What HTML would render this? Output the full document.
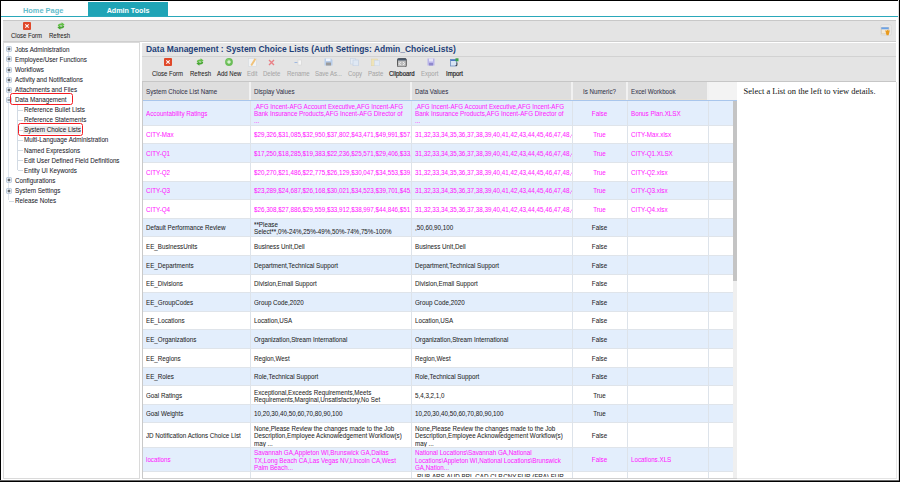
<!DOCTYPE html>
<html><head><meta charset="utf-8"><style>
html,body{margin:0;padding:0;width:900px;height:482px;overflow:hidden;background:#fff;}
body>div,body>svg{position:absolute;}
body>div{white-space:nowrap;}
</style></head><body>
<div style="left:23px;top:6.54px;font:bold 7.400px/7.400px 'Liberation Sans', sans-serif;color:#63bdcc;letter-spacing:0.000px;">Home Page</div>
<div style="left:88px;top:2px;width:80px;height:14px;background:#1fa4b6;"></div>
<div style="left:88px;top:7.85px;width:80px;height:9.15px;overflow:hidden;"><div style="position:absolute;left:0;top:0;width:80.00px;text-align:center;font:bold 7.150px/7.150px 'Liberation Sans', sans-serif;color:#fff;letter-spacing:0.000px;">Admin Tools</div></div>
<div style="left:1px;top:16px;width:898px;height:1px;background:#2aa8ba;"></div>
<div style="left:3px;top:20px;width:893px;height:22px;background:#e4e4e4;border-top:1px solid #c8c8c8;border-bottom:1px solid #cfcfcf;box-sizing:border-box;"></div>
<svg style="left:23px;top:21.5px" width="8" height="8" viewBox="0 0 8 8"><rect x="0" y="0" width="8" height="8" rx="1" fill="#e0482a"/><path d="M2.3 2.3 L5.7 5.7 M5.7 2.3 L2.3 5.7" stroke="#fff" stroke-width="1.05"/></svg>
<div style="left:11px;top:33.07px;font:normal 6.772px/6.772px 'Liberation Sans', sans-serif;color:#222;letter-spacing:0.000px;-webkit-text-stroke:0.05px #222;transform:scale(0.8860,1.0000);transform-origin:0 0;">Close Form</div>
<svg style="left:56.5px;top:21.6px" width="8" height="8" viewBox="0 0 8 8"><path d="M0.8 4.2 Q0.8 1.6 3.8 1.6 L4.6 1.6 L4.6 0.2 L7.6 2.4 L4.6 4.6 L4.6 3.2 L3.9 3.2 Q2.4 3.2 2.4 4.2 Z" fill="#63bf47"/><path d="M7.2 3.8 Q7.2 6.4 4.2 6.4 L3.4 6.4 L3.4 7.8 L0.4 5.6 L3.4 3.4 L3.4 4.8 L4.1 4.8 Q5.6 4.8 5.6 3.8 Z" fill="#47a632"/></svg>
<div style="left:49px;top:33.07px;font:normal 6.772px/6.772px 'Liberation Sans', sans-serif;color:#222;letter-spacing:0.000px;-webkit-text-stroke:0.05px #222;transform:scale(0.8860,1.0000);transform-origin:0 0;">Refresh</div>
<div style="left:879.5px;top:24.2px;width:12.5px;height:11.8px;border:1px solid #dcdcdc;border-radius:2.5px;box-sizing:border-box;background:#e8e8e8;"></div>
<svg style="left:881px;top:26.8px" width="9" height="9" viewBox="0 0 9 9"><rect x="0.3" y="0.3" width="7.4" height="6.6" rx="0.6" fill="#f3eadb" stroke="#c8b89a" stroke-width="0.6"/><rect x="0.3" y="0.3" width="7.4" height="2" fill="#6aa2e8"/><path d="M4.2 3.2 L5.6 3.8 L6.6 2.8 L7.6 3.8 L8.8 3.3 L7.6 8.2 L5.6 8.2 Z" fill="#e99a1c"/></svg>
<div style="left:3px;top:42px;width:137px;height:437px;background:#fff;border:1px solid #dadada;box-sizing:border-box;"></div>
<div style="left:8px;top:50px;width:1px;height:150px;background:#dfe5ec;"></div>
<div style="left:17px;top:104px;width:1px;height:66px;background:#d3dbe4;"></div>
<svg style="left:5.5px;top:46.40px" width="6" height="6" viewBox="0 0 6 6"><rect x="0.4" y="0.4" width="5.2" height="5.2" rx="1.3" fill="#e9eff6" stroke="#a9bcd2" stroke-width="0.8"/><path d="M1.6 3 H4.4 M3 1.6 V4.4" stroke="#1a1a1a" stroke-width="0.8"/></svg>
<div style="left:15.2px;top:46.70px;font:normal 7.088px/7.088px 'Liberation Sans', sans-serif;color:#1a1a2a;letter-spacing:0.000px;-webkit-text-stroke:0.05px #1a1a2a;transform:scale(0.8860,1.0000);transform-origin:0 0;">Jobs Administration</div>
<svg style="left:5.5px;top:56.48px" width="6" height="6" viewBox="0 0 6 6"><rect x="0.4" y="0.4" width="5.2" height="5.2" rx="1.3" fill="#e9eff6" stroke="#a9bcd2" stroke-width="0.8"/><path d="M1.6 3 H4.4 M3 1.6 V4.4" stroke="#1a1a1a" stroke-width="0.8"/></svg>
<div style="left:15.2px;top:56.78px;font:normal 7.088px/7.088px 'Liberation Sans', sans-serif;color:#1a1a2a;letter-spacing:0.000px;-webkit-text-stroke:0.05px #1a1a2a;transform:scale(0.8860,1.0000);transform-origin:0 0;">Employee/User Functions</div>
<svg style="left:5.5px;top:66.56px" width="6" height="6" viewBox="0 0 6 6"><rect x="0.4" y="0.4" width="5.2" height="5.2" rx="1.3" fill="#e9eff6" stroke="#a9bcd2" stroke-width="0.8"/><path d="M1.6 3 H4.4 M3 1.6 V4.4" stroke="#1a1a1a" stroke-width="0.8"/></svg>
<div style="left:15.2px;top:66.86px;font:normal 7.088px/7.088px 'Liberation Sans', sans-serif;color:#1a1a2a;letter-spacing:0.000px;-webkit-text-stroke:0.05px #1a1a2a;transform:scale(0.8860,1.0000);transform-origin:0 0;">Workflows</div>
<svg style="left:5.5px;top:76.64px" width="6" height="6" viewBox="0 0 6 6"><rect x="0.4" y="0.4" width="5.2" height="5.2" rx="1.3" fill="#e9eff6" stroke="#a9bcd2" stroke-width="0.8"/><path d="M1.6 3 H4.4 M3 1.6 V4.4" stroke="#1a1a1a" stroke-width="0.8"/></svg>
<div style="left:15.2px;top:76.94px;font:normal 7.088px/7.088px 'Liberation Sans', sans-serif;color:#1a1a2a;letter-spacing:0.000px;-webkit-text-stroke:0.05px #1a1a2a;transform:scale(0.8860,1.0000);transform-origin:0 0;">Activity and Notifications</div>
<svg style="left:5.5px;top:86.72px" width="6" height="6" viewBox="0 0 6 6"><rect x="0.4" y="0.4" width="5.2" height="5.2" rx="1.3" fill="#e9eff6" stroke="#a9bcd2" stroke-width="0.8"/><path d="M1.6 3 H4.4 M3 1.6 V4.4" stroke="#1a1a1a" stroke-width="0.8"/></svg>
<div style="left:15.2px;top:87.02px;font:normal 7.088px/7.088px 'Liberation Sans', sans-serif;color:#1a1a2a;letter-spacing:0.000px;-webkit-text-stroke:0.05px #1a1a2a;transform:scale(0.8860,1.0000);transform-origin:0 0;">Attachments and Files</div>
<svg style="left:5.5px;top:96.80px" width="6" height="6" viewBox="0 0 6 6"><rect x="0.4" y="0.4" width="5.2" height="5.2" rx="1.3" fill="#e9eff6" stroke="#a9bcd2" stroke-width="0.8"/><path d="M1.6 3 H4.4" stroke="#1a1a1a" stroke-width="0.8"/></svg>
<div style="left:15.2px;top:97.10px;font:normal 7.088px/7.088px 'Liberation Sans', sans-serif;color:#1a1a2a;letter-spacing:0.000px;-webkit-text-stroke:0.05px #1a1a2a;transform:scale(0.8860,1.0000);transform-origin:0 0;">Data Management</div>
<div style="left:18px;top:110px;width:5px;height:1px;background:#d3dbe4;"></div>
<div style="left:24.4px;top:107.18px;font:normal 7.088px/7.088px 'Liberation Sans', sans-serif;color:#1a1a2a;letter-spacing:0.000px;-webkit-text-stroke:0.05px #1a1a2a;transform:scale(0.8860,1.0000);transform-origin:0 0;">Reference Bullet Lists</div>
<div style="left:18px;top:120px;width:5px;height:1px;background:#d3dbe4;"></div>
<div style="left:24.4px;top:117.26px;font:normal 7.088px/7.088px 'Liberation Sans', sans-serif;color:#1a1a2a;letter-spacing:0.000px;-webkit-text-stroke:0.05px #1a1a2a;transform:scale(0.8860,1.0000);transform-origin:0 0;">Reference Statements</div>
<div style="left:18px;top:130px;width:5px;height:1px;background:#d3dbe4;"></div>
<div style="left:22.5px;top:126.13999999999999px;width:58px;height:7.8px;background:#ececec;"></div>
<div style="left:24.4px;top:127.34px;font:normal 7.088px/7.088px 'Liberation Sans', sans-serif;color:#1a1a2a;letter-spacing:0.000px;-webkit-text-stroke:0.05px #1a1a2a;transform:scale(0.8860,1.0000);transform-origin:0 0;">System Choice Lists</div>
<div style="left:18px;top:140px;width:5px;height:1px;background:#d3dbe4;"></div>
<div style="left:24.4px;top:137.42px;font:normal 7.088px/7.088px 'Liberation Sans', sans-serif;color:#1a1a2a;letter-spacing:0.000px;-webkit-text-stroke:0.05px #1a1a2a;transform:scale(0.8860,1.0000);transform-origin:0 0;">Multi-Language Administration</div>
<div style="left:18px;top:150px;width:5px;height:1px;background:#d3dbe4;"></div>
<div style="left:24.4px;top:147.50px;font:normal 7.088px/7.088px 'Liberation Sans', sans-serif;color:#1a1a2a;letter-spacing:0.000px;-webkit-text-stroke:0.05px #1a1a2a;transform:scale(0.8860,1.0000);transform-origin:0 0;">Named Expressions</div>
<div style="left:18px;top:160px;width:5px;height:1px;background:#d3dbe4;"></div>
<div style="left:24.4px;top:157.58px;font:normal 7.088px/7.088px 'Liberation Sans', sans-serif;color:#1a1a2a;letter-spacing:0.000px;-webkit-text-stroke:0.05px #1a1a2a;transform:scale(0.8860,1.0000);transform-origin:0 0;">Edit User Defined Field Definitions</div>
<div style="left:18px;top:170px;width:5px;height:1px;background:#d3dbe4;"></div>
<div style="left:24.4px;top:167.66px;font:normal 7.088px/7.088px 'Liberation Sans', sans-serif;color:#1a1a2a;letter-spacing:0.000px;-webkit-text-stroke:0.05px #1a1a2a;transform:scale(0.8860,1.0000);transform-origin:0 0;">Entity UI Keywords</div>
<svg style="left:5.5px;top:177.44px" width="6" height="6" viewBox="0 0 6 6"><rect x="0.4" y="0.4" width="5.2" height="5.2" rx="1.3" fill="#e9eff6" stroke="#a9bcd2" stroke-width="0.8"/><path d="M1.6 3 H4.4 M3 1.6 V4.4" stroke="#1a1a1a" stroke-width="0.8"/></svg>
<div style="left:15.2px;top:177.74px;font:normal 7.088px/7.088px 'Liberation Sans', sans-serif;color:#1a1a2a;letter-spacing:0.000px;-webkit-text-stroke:0.05px #1a1a2a;transform:scale(0.8860,1.0000);transform-origin:0 0;">Configurations</div>
<svg style="left:5.5px;top:187.52px" width="6" height="6" viewBox="0 0 6 6"><rect x="0.4" y="0.4" width="5.2" height="5.2" rx="1.3" fill="#e9eff6" stroke="#a9bcd2" stroke-width="0.8"/><path d="M1.6 3 H4.4 M3 1.6 V4.4" stroke="#1a1a1a" stroke-width="0.8"/></svg>
<div style="left:15.2px;top:187.82px;font:normal 7.088px/7.088px 'Liberation Sans', sans-serif;color:#1a1a2a;letter-spacing:0.000px;-webkit-text-stroke:0.05px #1a1a2a;transform:scale(0.8860,1.0000);transform-origin:0 0;">System Settings</div>
<div style="left:9px;top:201px;width:5px;height:1px;background:#d3dbe4;"></div>
<div style="left:15.2px;top:197.90px;font:normal 7.088px/7.088px 'Liberation Sans', sans-serif;color:#1a1a2a;letter-spacing:0.000px;-webkit-text-stroke:0.05px #1a1a2a;transform:scale(0.8860,1.0000);transform-origin:0 0;">Release Notes</div>
<div style="left:10.4px;top:92.8px;width:62.6px;height:11.9px;border:1.4px solid #f41c22;border-radius:2.5px;box-sizing:border-box;"></div>
<div style="left:18px;top:123.3px;width:65px;height:12.7px;border:1.4px solid #f41c22;border-radius:2.5px;box-sizing:border-box;"></div>
<div style="left:142px;top:43px;width:754px;height:13px;background:#e6e6e6;"></div>
<div style="left:146px;top:44.73px;font:bold 8.470px/8.470px 'Liberation Sans', sans-serif;color:#1d3f78;letter-spacing:0.000px;">Data Management : System Choice Lists (Auth Settings: Admin_ChoiceLists)</div>
<div style="left:142px;top:56px;width:754px;height:26px;background:#e4e4e4;border-top:1px solid #d2d2d2;border-bottom:1px solid #c6c6c6;box-sizing:border-box;"></div>
<svg style="left:163.6px;top:58.2px" width="8" height="8" viewBox="0 0 8 8"><rect x="0" y="0" width="8" height="8" rx="1" fill="#e0482a"/><path d="M2.3 2.3 L5.7 5.7 M5.7 2.3 L2.3 5.7" stroke="#fff" stroke-width="1.05"/></svg>
<div style="left:151.7px;top:70.87px;font:normal 6.772px/6.772px 'Liberation Sans', sans-serif;color:#222;letter-spacing:0.000px;-webkit-text-stroke:0.05px #222;transform:scale(0.8860,1.0000);transform-origin:0 0;">Close Form</div>
<svg style="left:195.5px;top:58.3px" width="8" height="8" viewBox="0 0 8 8"><path d="M0.8 4.2 Q0.8 1.6 3.8 1.6 L4.6 1.6 L4.6 0.2 L7.6 2.4 L4.6 4.6 L4.6 3.2 L3.9 3.2 Q2.4 3.2 2.4 4.2 Z" fill="#63bf47"/><path d="M7.2 3.8 Q7.2 6.4 4.2 6.4 L3.4 6.4 L3.4 7.8 L0.4 5.6 L3.4 3.4 L3.4 4.8 L4.1 4.8 Q5.6 4.8 5.6 3.8 Z" fill="#47a632"/></svg>
<div style="left:190px;top:70.87px;font:normal 6.772px/6.772px 'Liberation Sans', sans-serif;color:#222;letter-spacing:0.000px;-webkit-text-stroke:0.05px #222;transform:scale(0.8860,1.0000);transform-origin:0 0;">Refresh</div>
<svg style="left:224.5px;top:58.3px" width="8" height="8" viewBox="0 0 8 8"><circle cx="4" cy="4" r="3.9" fill="#6abd57"/><circle cx="3.6" cy="3.4" r="2.4" fill="#8fd47a" opacity="0.6"/><path d="M4 2.2 V5.8 M2.2 4 H5.8" stroke="#fff" stroke-width="0.9"/></svg>
<div style="left:216.7px;top:70.87px;font:normal 6.772px/6.772px 'Liberation Sans', sans-serif;color:#222;letter-spacing:0.000px;-webkit-text-stroke:0.05px #222;transform:scale(0.8860,1.0000);transform-origin:0 0;">Add New</div>
<svg style="left:247.5px;top:58px" width="9" height="9" viewBox="0 0 9 9"><rect x="0.4" y="0.4" width="8" height="8" fill="#f1f3f5" stroke="#d5d9de" stroke-width="0.6"/><path d="M7.4 0.8 L3.2 7.6" stroke="#f0c27a" stroke-width="1.9"/></svg>
<div style="left:246.7px;top:70.87px;font:normal 6.772px/6.772px 'Liberation Sans', sans-serif;color:#a6a6a6;letter-spacing:0.000px;-webkit-text-stroke:0.05px #a6a6a6;transform:scale(0.8860,1.0000);transform-origin:0 0;">Edit</div>
<svg style="left:268px;top:59px" width="7" height="7" viewBox="0 0 7 7"><path d="M1 1 L6 6 M6 1 L1 6" stroke="#e98086" stroke-width="1.4"/></svg>
<div style="left:263.3px;top:70.87px;font:normal 6.772px/6.772px 'Liberation Sans', sans-serif;color:#a6a6a6;letter-spacing:0.000px;-webkit-text-stroke:0.05px #a6a6a6;transform:scale(0.8860,1.0000);transform-origin:0 0;">Delete</div>
<svg style="left:294px;top:59px" width="8" height="7" viewBox="0 0 8 7"><path d="M0.5 3.5 H3.5" stroke="#9fb8e0" stroke-width="1"/><rect x="4" y="1" width="3.4" height="5" fill="#f6f6f6" stroke="#cfcfcf" stroke-width="0.5"/></svg>
<div style="left:286.7px;top:70.87px;font:normal 6.772px/6.772px 'Liberation Sans', sans-serif;color:#a6a6a6;letter-spacing:0.000px;-webkit-text-stroke:0.05px #a6a6a6;transform:scale(0.8860,1.0000);transform-origin:0 0;">Rename</div>
<svg style="left:324px;top:58px" width="9" height="8" viewBox="0 0 9 8"><path d="M0.5 0.5 H7 L8.5 2 V7.5 H0.5 Z" fill="#b8cdea"/><rect x="2" y="4.5" width="5" height="3" fill="#9a9a9a"/><rect x="2" y="0.5" width="4.5" height="2.5" fill="#eef3fa"/></svg>
<div style="left:315px;top:70.87px;font:normal 6.772px/6.772px 'Liberation Sans', sans-serif;color:#a6a6a6;letter-spacing:0.000px;-webkit-text-stroke:0.05px #a6a6a6;transform:scale(0.8860,1.0000);transform-origin:0 0;">Save As...</div>
<svg style="left:350px;top:58px" width="9" height="8" viewBox="0 0 9 8"><rect x="0.5" y="0.5" width="5" height="5.5" fill="#e4ebf4" stroke="#c6d3e4" stroke-width="0.6"/><rect x="3" y="2" width="5.5" height="5.8" fill="#dfe8f4" stroke="#c0cee2" stroke-width="0.6"/></svg>
<div style="left:347.8px;top:70.87px;font:normal 6.772px/6.772px 'Liberation Sans', sans-serif;color:#a6a6a6;letter-spacing:0.000px;-webkit-text-stroke:0.05px #a6a6a6;transform:scale(0.8860,1.0000);transform-origin:0 0;">Copy</div>
<svg style="left:370.5px;top:58px" width="9" height="8" viewBox="0 0 9 8"><rect x="0.5" y="1" width="6" height="6.8" fill="#efe3b8" stroke="#e0d3a0" stroke-width="0.5"/><rect x="3.5" y="2.5" width="5" height="5.3" fill="#e2eaf5" stroke="#c9d5e5" stroke-width="0.5"/></svg>
<div style="left:367.8px;top:70.87px;font:normal 6.772px/6.772px 'Liberation Sans', sans-serif;color:#a6a6a6;letter-spacing:0.000px;-webkit-text-stroke:0.05px #a6a6a6;transform:scale(0.8860,1.0000);transform-origin:0 0;">Paste</div>
<svg style="left:397.2px;top:57.6px" width="10" height="9.5" viewBox="0 0 10 9.5"><rect x="0.5" y="0.5" width="8.8" height="8.5" rx="1.2" fill="#bdbdbd" stroke="#5a5a5a" stroke-width="1"/><rect x="0.5" y="0.5" width="8.8" height="2" rx="0.8" fill="#46566a"/><path d="M3.6 4.2 L2.3 5.6 L3.6 7 M6.2 4.2 L7.5 5.6 L6.2 7" stroke="#fafafa" stroke-width="0.9" fill="none"/></svg>
<div style="left:388.9px;top:70.87px;font:normal 6.772px/6.772px 'Liberation Sans', sans-serif;color:#1a1a1a;letter-spacing:0.000px;-webkit-text-stroke:0.05px #1a1a1a;-webkit-text-stroke:0.18px #1a1a1a;transform:scale(0.8860,1.0000);transform-origin:0 0;">Clipboard</div>
<svg style="left:426.5px;top:58px" width="8" height="8" viewBox="0 0 8 8"><path d="M0.5 0.5 H7.5 V7.5 H0.5 Z" fill="#b9b4e8"/><rect x="2" y="0.5" width="4" height="3" fill="#e6e4f8"/><rect x="2" y="5" width="4" height="2.5" fill="#8f88cc"/></svg>
<div style="left:421.1px;top:70.87px;font:normal 6.772px/6.772px 'Liberation Sans', sans-serif;color:#a6a6a6;letter-spacing:0.000px;-webkit-text-stroke:0.05px #a6a6a6;transform:scale(0.8860,1.0000);transform-origin:0 0;">Export</div>
<svg style="left:450px;top:58px" width="9" height="9" viewBox="0 0 9 9"><rect x="0.5" y="1.5" width="6" height="6.5" fill="#d8e4f4" stroke="#6f8fc0" stroke-width="0.8"/><rect x="0.5" y="1.5" width="6" height="1.5" fill="#4a78c0"/><rect x="5.5" y="0.3" width="3" height="3" fill="#3aa04a"/><path d="M7 4.5 V7.5 H5.5" stroke="#333" stroke-width="0.8" fill="none"/></svg>
<div style="left:445.6px;top:70.87px;font:normal 6.772px/6.772px 'Liberation Sans', sans-serif;color:#1a1a1a;letter-spacing:0.000px;-webkit-text-stroke:0.05px #1a1a1a;-webkit-text-stroke:0.18px #1a1a1a;transform:scale(0.8860,1.0000);transform-origin:0 0;">Import</div>
<div style="left:142px;top:82px;width:595px;height:396px;background:#fff;"></div>
<div style="left:142px;top:82px;width:566px;height:18px;background:#dedede;"></div>
<div style="left:708px;top:82px;width:29px;height:18px;background:#f3f3f3;"></div>
<div style="left:142px;top:99px;width:566px;height:1px;background:#e6e0d6;"></div>
<div style="left:142px;top:100px;width:595px;height:1px;background:#a9c6ec;"></div>
<div style="left:249px;top:82px;width:2px;height:18px;background:#f1f1f1;"></div>
<div style="left:410px;top:82px;width:2px;height:18px;background:#f1f1f1;"></div>
<div style="left:571px;top:82px;width:2px;height:18px;background:#f1f1f1;"></div>
<div style="left:626px;top:82px;width:2px;height:18px;background:#f1f1f1;"></div>
<div style="left:707px;top:82px;width:2px;height:18px;background:#f1f1f1;"></div>
<div style="left:145.8px;top:88.28px;font:normal 6.998px/6.998px 'Liberation Sans', sans-serif;color:#33334a;letter-spacing:0.000px;-webkit-text-stroke:0.05px #33334a;transform:scale(0.8860,1.0000);transform-origin:0 0;">System Choice List Name</div>
<div style="left:253.9px;top:88.28px;font:normal 6.998px/6.998px 'Liberation Sans', sans-serif;color:#33334a;letter-spacing:0.000px;-webkit-text-stroke:0.05px #33334a;transform:scale(0.8860,1.0000);transform-origin:0 0;">Display Values</div>
<div style="left:415px;top:88.28px;font:normal 6.998px/6.998px 'Liberation Sans', sans-serif;color:#33334a;letter-spacing:0.000px;-webkit-text-stroke:0.05px #33334a;transform:scale(0.8860,1.0000);transform-origin:0 0;">Data Values</div>
<div style="left:572px;top:88.28px;width:55px;height:9.00px;overflow:hidden;"><div style="position:absolute;left:0;top:0;width:62.08px;text-align:center;font:normal 6.998px/6.998px 'Liberation Sans', sans-serif;color:#33334a;letter-spacing:0.000px;-webkit-text-stroke:0.05px #33334a;transform:scale(0.8860,1.0000);transform-origin:0 0;">Is Numeric?</div></div>
<div style="left:630.6px;top:88.28px;font:normal 6.998px/6.998px 'Liberation Sans', sans-serif;color:#33334a;letter-spacing:0.000px;-webkit-text-stroke:0.05px #33334a;transform:scale(0.8860,1.0000);transform-origin:0 0;">Excel Workbook</div>
<div style="left:142px;top:101px;width:591px;height:24px;background:#e3eefc;"></div>
<div style="left:145.8px;top:109.53px;width:104px;height:9.05px;overflow:hidden;"><div style="position:absolute;left:0;top:0;font:normal 7.054px/7.054px 'Liberation Sans', sans-serif;color:#ff1aff;letter-spacing:0.000px;-webkit-text-stroke:0.05px #ff1aff;white-space:nowrap;transform:scale(0.8860,1.0000);transform-origin:0 0;">Accountability Ratings</div></div>
<div style="left:253.9px;top:102.63px;width:157px;height:9.05px;overflow:hidden;"><div style="position:absolute;left:0;top:0;font:normal 7.054px/7.054px 'Liberation Sans', sans-serif;color:#ff1aff;letter-spacing:0.000px;-webkit-text-stroke:0.05px #ff1aff;white-space:nowrap;transform:scale(0.8860,1.0000);transform-origin:0 0;">,AFG Incent-AFG Account Executive,AFG Incent-AFG</div></div>
<div style="left:253.9px;top:109.98px;width:157px;height:9.05px;overflow:hidden;"><div style="position:absolute;left:0;top:0;font:normal 7.054px/7.054px 'Liberation Sans', sans-serif;color:#ff1aff;letter-spacing:0.000px;-webkit-text-stroke:0.05px #ff1aff;white-space:nowrap;transform:scale(0.8860,1.0000);transform-origin:0 0;">Bank Insurance Products,AFG Incent-AFG Director of</div></div>
<div style="left:253.9px;top:117.33px;width:157px;height:9.05px;overflow:hidden;"><div style="position:absolute;left:0;top:0;font:normal 7.054px/7.054px 'Liberation Sans', sans-serif;color:#ff1aff;letter-spacing:0.000px;-webkit-text-stroke:0.05px #ff1aff;white-space:nowrap;transform:scale(0.8860,1.0000);transform-origin:0 0;">...</div></div>
<div style="left:415px;top:102.63px;width:157px;height:9.05px;overflow:hidden;"><div style="position:absolute;left:0;top:0;font:normal 7.054px/7.054px 'Liberation Sans', sans-serif;color:#ff1aff;letter-spacing:0.000px;-webkit-text-stroke:0.05px #ff1aff;white-space:nowrap;transform:scale(0.8860,1.0000);transform-origin:0 0;">,AFG Incent-AFG Account Executive,AFG Incent-AFG</div></div>
<div style="left:415px;top:109.98px;width:157px;height:9.05px;overflow:hidden;"><div style="position:absolute;left:0;top:0;font:normal 7.054px/7.054px 'Liberation Sans', sans-serif;color:#ff1aff;letter-spacing:0.000px;-webkit-text-stroke:0.05px #ff1aff;white-space:nowrap;transform:scale(0.8860,1.0000);transform-origin:0 0;">Bank Insurance Products,AFG Incent-AFG Director of</div></div>
<div style="left:415px;top:117.33px;width:157px;height:9.05px;overflow:hidden;"><div style="position:absolute;left:0;top:0;font:normal 7.054px/7.054px 'Liberation Sans', sans-serif;color:#ff1aff;letter-spacing:0.000px;-webkit-text-stroke:0.05px #ff1aff;white-space:nowrap;transform:scale(0.8860,1.0000);transform-origin:0 0;">...</div></div>
<div style="left:572px;top:109.53px;width:55px;height:9.05px;overflow:hidden;"><div style="position:absolute;left:0;top:0;width:62.08px;text-align:center;font:normal 7.054px/7.054px 'Liberation Sans', sans-serif;color:#ff1aff;letter-spacing:0.000px;-webkit-text-stroke:0.05px #ff1aff;transform:scale(0.8860,1.0000);transform-origin:0 0;">False</div></div>
<div style="left:630.6px;top:109.53px;width:77px;height:9.05px;overflow:hidden;"><div style="position:absolute;left:0;top:0;font:normal 7.054px/7.054px 'Liberation Sans', sans-serif;color:#ff1aff;letter-spacing:0.000px;-webkit-text-stroke:0.05px #ff1aff;white-space:nowrap;transform:scale(0.8860,1.0000);transform-origin:0 0;">Bonus Plan.XLSX</div></div>
<div style="left:142px;top:125px;width:591px;height:18.599999999999994px;background:#ffffff;"></div>
<div style="left:145.8px;top:131.33px;width:104px;height:9.05px;overflow:hidden;"><div style="position:absolute;left:0;top:0;font:normal 7.054px/7.054px 'Liberation Sans', sans-serif;color:#ff1aff;letter-spacing:0.000px;-webkit-text-stroke:0.05px #ff1aff;white-space:nowrap;transform:scale(0.8860,1.0000);transform-origin:0 0;">CITY-Max</div></div>
<div style="left:253.9px;top:131.33px;width:157px;height:9.05px;overflow:hidden;"><div style="position:absolute;left:0;top:0;font:normal 7.054px/7.054px 'Liberation Sans', sans-serif;color:#ff1aff;letter-spacing:0.000px;-webkit-text-stroke:0.05px #ff1aff;white-space:nowrap;transform:scale(0.8860,1.0000);transform-origin:0 0;">$29,326,$31,085,$32,950,$37,802,$43,471,$49,991,$57,489</div></div>
<div style="left:415px;top:131.33px;width:157px;height:9.05px;overflow:hidden;"><div style="position:absolute;left:0;top:0;font:normal 7.054px/7.054px 'Liberation Sans', sans-serif;color:#ff1aff;letter-spacing:0.000px;-webkit-text-stroke:0.05px #ff1aff;white-space:nowrap;transform:scale(0.8860,1.0000);transform-origin:0 0;">31,32,33,34,35,36,37,38,39,40,41,42,43,44,45,46,47,48,49</div></div>
<div style="left:572px;top:131.33px;width:55px;height:9.05px;overflow:hidden;"><div style="position:absolute;left:0;top:0;width:62.08px;text-align:center;font:normal 7.054px/7.054px 'Liberation Sans', sans-serif;color:#ff1aff;letter-spacing:0.000px;-webkit-text-stroke:0.05px #ff1aff;transform:scale(0.8860,1.0000);transform-origin:0 0;">True</div></div>
<div style="left:630.6px;top:131.33px;width:77px;height:9.05px;overflow:hidden;"><div style="position:absolute;left:0;top:0;font:normal 7.054px/7.054px 'Liberation Sans', sans-serif;color:#ff1aff;letter-spacing:0.000px;-webkit-text-stroke:0.05px #ff1aff;white-space:nowrap;transform:scale(0.8860,1.0000);transform-origin:0 0;">CITY-Max.xlsx</div></div>
<div style="left:142px;top:143.6px;width:591px;height:18.599999999999994px;background:#e3eefc;"></div>
<div style="left:145.8px;top:149.93px;width:104px;height:9.05px;overflow:hidden;"><div style="position:absolute;left:0;top:0;font:normal 7.054px/7.054px 'Liberation Sans', sans-serif;color:#ff1aff;letter-spacing:0.000px;-webkit-text-stroke:0.05px #ff1aff;white-space:nowrap;transform:scale(0.8860,1.0000);transform-origin:0 0;">CITY-Q1</div></div>
<div style="left:253.9px;top:149.93px;width:157px;height:9.05px;overflow:hidden;"><div style="position:absolute;left:0;top:0;font:normal 7.054px/7.054px 'Liberation Sans', sans-serif;color:#ff1aff;letter-spacing:0.000px;-webkit-text-stroke:0.05px #ff1aff;white-space:nowrap;transform:scale(0.8860,1.0000);transform-origin:0 0;">$17,250,$18,285,$19,383,$22,236,$25,571,$29,406,$33,817</div></div>
<div style="left:415px;top:149.93px;width:157px;height:9.05px;overflow:hidden;"><div style="position:absolute;left:0;top:0;font:normal 7.054px/7.054px 'Liberation Sans', sans-serif;color:#ff1aff;letter-spacing:0.000px;-webkit-text-stroke:0.05px #ff1aff;white-space:nowrap;transform:scale(0.8860,1.0000);transform-origin:0 0;">31,32,33,34,35,36,37,38,39,40,41,42,43,44,45,46,47,48,49</div></div>
<div style="left:572px;top:149.93px;width:55px;height:9.05px;overflow:hidden;"><div style="position:absolute;left:0;top:0;width:62.08px;text-align:center;font:normal 7.054px/7.054px 'Liberation Sans', sans-serif;color:#ff1aff;letter-spacing:0.000px;-webkit-text-stroke:0.05px #ff1aff;transform:scale(0.8860,1.0000);transform-origin:0 0;">True</div></div>
<div style="left:630.6px;top:149.93px;width:77px;height:9.05px;overflow:hidden;"><div style="position:absolute;left:0;top:0;font:normal 7.054px/7.054px 'Liberation Sans', sans-serif;color:#ff1aff;letter-spacing:0.000px;-webkit-text-stroke:0.05px #ff1aff;white-space:nowrap;transform:scale(0.8860,1.0000);transform-origin:0 0;">CITY-Q1.XLSX</div></div>
<div style="left:142px;top:162.2px;width:591px;height:18.600000000000023px;background:#ffffff;"></div>
<div style="left:145.8px;top:168.53px;width:104px;height:9.05px;overflow:hidden;"><div style="position:absolute;left:0;top:0;font:normal 7.054px/7.054px 'Liberation Sans', sans-serif;color:#ff1aff;letter-spacing:0.000px;-webkit-text-stroke:0.05px #ff1aff;white-space:nowrap;transform:scale(0.8860,1.0000);transform-origin:0 0;">CITY-Q2</div></div>
<div style="left:253.9px;top:168.53px;width:157px;height:9.05px;overflow:hidden;"><div style="position:absolute;left:0;top:0;font:normal 7.054px/7.054px 'Liberation Sans', sans-serif;color:#ff1aff;letter-spacing:0.000px;-webkit-text-stroke:0.05px #ff1aff;white-space:nowrap;transform:scale(0.8860,1.0000);transform-origin:0 0;">$20,270,$21,486,$22,775,$26,129,$30,047,$34,553,$39,736</div></div>
<div style="left:415px;top:168.53px;width:157px;height:9.05px;overflow:hidden;"><div style="position:absolute;left:0;top:0;font:normal 7.054px/7.054px 'Liberation Sans', sans-serif;color:#ff1aff;letter-spacing:0.000px;-webkit-text-stroke:0.05px #ff1aff;white-space:nowrap;transform:scale(0.8860,1.0000);transform-origin:0 0;">31,32,33,34,35,36,37,38,39,40,41,42,43,44,45,46,47,48,49</div></div>
<div style="left:572px;top:168.53px;width:55px;height:9.05px;overflow:hidden;"><div style="position:absolute;left:0;top:0;width:62.08px;text-align:center;font:normal 7.054px/7.054px 'Liberation Sans', sans-serif;color:#ff1aff;letter-spacing:0.000px;-webkit-text-stroke:0.05px #ff1aff;transform:scale(0.8860,1.0000);transform-origin:0 0;">True</div></div>
<div style="left:630.6px;top:168.53px;width:77px;height:9.05px;overflow:hidden;"><div style="position:absolute;left:0;top:0;font:normal 7.054px/7.054px 'Liberation Sans', sans-serif;color:#ff1aff;letter-spacing:0.000px;-webkit-text-stroke:0.05px #ff1aff;white-space:nowrap;transform:scale(0.8860,1.0000);transform-origin:0 0;">CITY-Q2.xlsx</div></div>
<div style="left:142px;top:180.8px;width:591px;height:18.599999999999994px;background:#e3eefc;"></div>
<div style="left:145.8px;top:187.13px;width:104px;height:9.05px;overflow:hidden;"><div style="position:absolute;left:0;top:0;font:normal 7.054px/7.054px 'Liberation Sans', sans-serif;color:#ff1aff;letter-spacing:0.000px;-webkit-text-stroke:0.05px #ff1aff;white-space:nowrap;transform:scale(0.8860,1.0000);transform-origin:0 0;">CITY-Q3</div></div>
<div style="left:253.9px;top:187.13px;width:157px;height:9.05px;overflow:hidden;"><div style="position:absolute;left:0;top:0;font:normal 7.054px/7.054px 'Liberation Sans', sans-serif;color:#ff1aff;letter-spacing:0.000px;-webkit-text-stroke:0.05px #ff1aff;white-space:nowrap;transform:scale(0.8860,1.0000);transform-origin:0 0;">$23,289,$24,687,$26,168,$30,021,$34,523,$39,701,$45,656</div></div>
<div style="left:415px;top:187.13px;width:157px;height:9.05px;overflow:hidden;"><div style="position:absolute;left:0;top:0;font:normal 7.054px/7.054px 'Liberation Sans', sans-serif;color:#ff1aff;letter-spacing:0.000px;-webkit-text-stroke:0.05px #ff1aff;white-space:nowrap;transform:scale(0.8860,1.0000);transform-origin:0 0;">31,32,33,34,35,36,37,38,39,40,41,42,43,44,45,46,47,48,49</div></div>
<div style="left:572px;top:187.13px;width:55px;height:9.05px;overflow:hidden;"><div style="position:absolute;left:0;top:0;width:62.08px;text-align:center;font:normal 7.054px/7.054px 'Liberation Sans', sans-serif;color:#ff1aff;letter-spacing:0.000px;-webkit-text-stroke:0.05px #ff1aff;transform:scale(0.8860,1.0000);transform-origin:0 0;">True</div></div>
<div style="left:630.6px;top:187.13px;width:77px;height:9.05px;overflow:hidden;"><div style="position:absolute;left:0;top:0;font:normal 7.054px/7.054px 'Liberation Sans', sans-serif;color:#ff1aff;letter-spacing:0.000px;-webkit-text-stroke:0.05px #ff1aff;white-space:nowrap;transform:scale(0.8860,1.0000);transform-origin:0 0;">CITY-Q3.xlsx</div></div>
<div style="left:142px;top:199.4px;width:591px;height:18.599999999999994px;background:#ffffff;"></div>
<div style="left:145.8px;top:205.73px;width:104px;height:9.05px;overflow:hidden;"><div style="position:absolute;left:0;top:0;font:normal 7.054px/7.054px 'Liberation Sans', sans-serif;color:#ff1aff;letter-spacing:0.000px;-webkit-text-stroke:0.05px #ff1aff;white-space:nowrap;transform:scale(0.8860,1.0000);transform-origin:0 0;">CITY-Q4</div></div>
<div style="left:253.9px;top:205.73px;width:157px;height:9.05px;overflow:hidden;"><div style="position:absolute;left:0;top:0;font:normal 7.054px/7.054px 'Liberation Sans', sans-serif;color:#ff1aff;letter-spacing:0.000px;-webkit-text-stroke:0.05px #ff1aff;white-space:nowrap;transform:scale(0.8860,1.0000);transform-origin:0 0;">$26,308,$27,886,$29,559,$33,912,$38,997,$44,846,$51,573</div></div>
<div style="left:415px;top:205.73px;width:157px;height:9.05px;overflow:hidden;"><div style="position:absolute;left:0;top:0;font:normal 7.054px/7.054px 'Liberation Sans', sans-serif;color:#ff1aff;letter-spacing:0.000px;-webkit-text-stroke:0.05px #ff1aff;white-space:nowrap;transform:scale(0.8860,1.0000);transform-origin:0 0;">31,32,33,34,35,36,37,38,39,40,41,42,43,44,45,46,47,48,49</div></div>
<div style="left:572px;top:205.73px;width:55px;height:9.05px;overflow:hidden;"><div style="position:absolute;left:0;top:0;width:62.08px;text-align:center;font:normal 7.054px/7.054px 'Liberation Sans', sans-serif;color:#ff1aff;letter-spacing:0.000px;-webkit-text-stroke:0.05px #ff1aff;transform:scale(0.8860,1.0000);transform-origin:0 0;">True</div></div>
<div style="left:630.6px;top:205.73px;width:77px;height:9.05px;overflow:hidden;"><div style="position:absolute;left:0;top:0;font:normal 7.054px/7.054px 'Liberation Sans', sans-serif;color:#ff1aff;letter-spacing:0.000px;-webkit-text-stroke:0.05px #ff1aff;white-space:nowrap;transform:scale(0.8860,1.0000);transform-origin:0 0;">CITY-Q4.xlsx</div></div>
<div style="left:142px;top:218.0px;width:591px;height:18.599999999999994px;background:#e3eefc;"></div>
<div style="left:145.8px;top:224.33px;width:104px;height:9.05px;overflow:hidden;"><div style="position:absolute;left:0;top:0;font:normal 7.054px/7.054px 'Liberation Sans', sans-serif;color:#1e1e1e;letter-spacing:0.000px;-webkit-text-stroke:0.05px #1e1e1e;white-space:nowrap;transform:scale(0.8860,1.0000);transform-origin:0 0;">Default Performance Review</div></div>
<div style="left:253.9px;top:221.10px;width:157px;height:9.05px;overflow:hidden;"><div style="position:absolute;left:0;top:0;font:normal 7.054px/7.054px 'Liberation Sans', sans-serif;color:#1e1e1e;letter-spacing:0.000px;-webkit-text-stroke:0.05px #1e1e1e;white-space:nowrap;transform:scale(0.8860,1.0000);transform-origin:0 0;">**Please</div></div>
<div style="left:253.9px;top:228.45px;width:157px;height:9.05px;overflow:hidden;"><div style="position:absolute;left:0;top:0;font:normal 7.054px/7.054px 'Liberation Sans', sans-serif;color:#1e1e1e;letter-spacing:0.000px;-webkit-text-stroke:0.05px #1e1e1e;white-space:nowrap;transform:scale(0.8860,1.0000);transform-origin:0 0;">Select**,0%-24%,25%-49%,50%-74%,75%-100%</div></div>
<div style="left:415px;top:224.33px;width:157px;height:9.05px;overflow:hidden;"><div style="position:absolute;left:0;top:0;font:normal 7.054px/7.054px 'Liberation Sans', sans-serif;color:#1e1e1e;letter-spacing:0.000px;-webkit-text-stroke:0.05px #1e1e1e;white-space:nowrap;transform:scale(0.8860,1.0000);transform-origin:0 0;">,50,60,90,100</div></div>
<div style="left:572px;top:224.33px;width:55px;height:9.05px;overflow:hidden;"><div style="position:absolute;left:0;top:0;width:62.08px;text-align:center;font:normal 7.054px/7.054px 'Liberation Sans', sans-serif;color:#1e1e1e;letter-spacing:0.000px;-webkit-text-stroke:0.05px #1e1e1e;transform:scale(0.8860,1.0000);transform-origin:0 0;">False</div></div>
<div style="left:142px;top:236.6px;width:591px;height:18.599999999999994px;background:#ffffff;"></div>
<div style="left:145.8px;top:242.93px;width:104px;height:9.05px;overflow:hidden;"><div style="position:absolute;left:0;top:0;font:normal 7.054px/7.054px 'Liberation Sans', sans-serif;color:#1e1e1e;letter-spacing:0.000px;-webkit-text-stroke:0.05px #1e1e1e;white-space:nowrap;transform:scale(0.8860,1.0000);transform-origin:0 0;">EE_BusinessUnits</div></div>
<div style="left:253.9px;top:242.93px;width:157px;height:9.05px;overflow:hidden;"><div style="position:absolute;left:0;top:0;font:normal 7.054px/7.054px 'Liberation Sans', sans-serif;color:#1e1e1e;letter-spacing:0.000px;-webkit-text-stroke:0.05px #1e1e1e;white-space:nowrap;transform:scale(0.8860,1.0000);transform-origin:0 0;">Business Unit,Dell</div></div>
<div style="left:415px;top:242.93px;width:157px;height:9.05px;overflow:hidden;"><div style="position:absolute;left:0;top:0;font:normal 7.054px/7.054px 'Liberation Sans', sans-serif;color:#1e1e1e;letter-spacing:0.000px;-webkit-text-stroke:0.05px #1e1e1e;white-space:nowrap;transform:scale(0.8860,1.0000);transform-origin:0 0;">Business Unit,Dell</div></div>
<div style="left:572px;top:242.93px;width:55px;height:9.05px;overflow:hidden;"><div style="position:absolute;left:0;top:0;width:62.08px;text-align:center;font:normal 7.054px/7.054px 'Liberation Sans', sans-serif;color:#1e1e1e;letter-spacing:0.000px;-webkit-text-stroke:0.05px #1e1e1e;transform:scale(0.8860,1.0000);transform-origin:0 0;">False</div></div>
<div style="left:142px;top:255.2px;width:591px;height:18.600000000000023px;background:#e3eefc;"></div>
<div style="left:145.8px;top:261.53px;width:104px;height:9.05px;overflow:hidden;"><div style="position:absolute;left:0;top:0;font:normal 7.054px/7.054px 'Liberation Sans', sans-serif;color:#1e1e1e;letter-spacing:0.000px;-webkit-text-stroke:0.05px #1e1e1e;white-space:nowrap;transform:scale(0.8860,1.0000);transform-origin:0 0;">EE_Departments</div></div>
<div style="left:253.9px;top:261.53px;width:157px;height:9.05px;overflow:hidden;"><div style="position:absolute;left:0;top:0;font:normal 7.054px/7.054px 'Liberation Sans', sans-serif;color:#1e1e1e;letter-spacing:0.000px;-webkit-text-stroke:0.05px #1e1e1e;white-space:nowrap;transform:scale(0.8860,1.0000);transform-origin:0 0;">Department,Technical Support</div></div>
<div style="left:415px;top:261.53px;width:157px;height:9.05px;overflow:hidden;"><div style="position:absolute;left:0;top:0;font:normal 7.054px/7.054px 'Liberation Sans', sans-serif;color:#1e1e1e;letter-spacing:0.000px;-webkit-text-stroke:0.05px #1e1e1e;white-space:nowrap;transform:scale(0.8860,1.0000);transform-origin:0 0;">Department,Technical Support</div></div>
<div style="left:572px;top:261.53px;width:55px;height:9.05px;overflow:hidden;"><div style="position:absolute;left:0;top:0;width:62.08px;text-align:center;font:normal 7.054px/7.054px 'Liberation Sans', sans-serif;color:#1e1e1e;letter-spacing:0.000px;-webkit-text-stroke:0.05px #1e1e1e;transform:scale(0.8860,1.0000);transform-origin:0 0;">False</div></div>
<div style="left:142px;top:273.8px;width:591px;height:18.599999999999966px;background:#ffffff;"></div>
<div style="left:145.8px;top:280.13px;width:104px;height:9.05px;overflow:hidden;"><div style="position:absolute;left:0;top:0;font:normal 7.054px/7.054px 'Liberation Sans', sans-serif;color:#1e1e1e;letter-spacing:0.000px;-webkit-text-stroke:0.05px #1e1e1e;white-space:nowrap;transform:scale(0.8860,1.0000);transform-origin:0 0;">EE_Divisions</div></div>
<div style="left:253.9px;top:280.13px;width:157px;height:9.05px;overflow:hidden;"><div style="position:absolute;left:0;top:0;font:normal 7.054px/7.054px 'Liberation Sans', sans-serif;color:#1e1e1e;letter-spacing:0.000px;-webkit-text-stroke:0.05px #1e1e1e;white-space:nowrap;transform:scale(0.8860,1.0000);transform-origin:0 0;">Division,Email Support</div></div>
<div style="left:415px;top:280.13px;width:157px;height:9.05px;overflow:hidden;"><div style="position:absolute;left:0;top:0;font:normal 7.054px/7.054px 'Liberation Sans', sans-serif;color:#1e1e1e;letter-spacing:0.000px;-webkit-text-stroke:0.05px #1e1e1e;white-space:nowrap;transform:scale(0.8860,1.0000);transform-origin:0 0;">Division,Email Support</div></div>
<div style="left:572px;top:280.13px;width:55px;height:9.05px;overflow:hidden;"><div style="position:absolute;left:0;top:0;width:62.08px;text-align:center;font:normal 7.054px/7.054px 'Liberation Sans', sans-serif;color:#1e1e1e;letter-spacing:0.000px;-webkit-text-stroke:0.05px #1e1e1e;transform:scale(0.8860,1.0000);transform-origin:0 0;">False</div></div>
<div style="left:142px;top:292.4px;width:591px;height:18.600000000000023px;background:#e3eefc;"></div>
<div style="left:145.8px;top:298.73px;width:104px;height:9.05px;overflow:hidden;"><div style="position:absolute;left:0;top:0;font:normal 7.054px/7.054px 'Liberation Sans', sans-serif;color:#1e1e1e;letter-spacing:0.000px;-webkit-text-stroke:0.05px #1e1e1e;white-space:nowrap;transform:scale(0.8860,1.0000);transform-origin:0 0;">EE_GroupCodes</div></div>
<div style="left:253.9px;top:298.73px;width:157px;height:9.05px;overflow:hidden;"><div style="position:absolute;left:0;top:0;font:normal 7.054px/7.054px 'Liberation Sans', sans-serif;color:#1e1e1e;letter-spacing:0.000px;-webkit-text-stroke:0.05px #1e1e1e;white-space:nowrap;transform:scale(0.8860,1.0000);transform-origin:0 0;">Group Code,2020</div></div>
<div style="left:415px;top:298.73px;width:157px;height:9.05px;overflow:hidden;"><div style="position:absolute;left:0;top:0;font:normal 7.054px/7.054px 'Liberation Sans', sans-serif;color:#1e1e1e;letter-spacing:0.000px;-webkit-text-stroke:0.05px #1e1e1e;white-space:nowrap;transform:scale(0.8860,1.0000);transform-origin:0 0;">Group Code,2020</div></div>
<div style="left:572px;top:298.73px;width:55px;height:9.05px;overflow:hidden;"><div style="position:absolute;left:0;top:0;width:62.08px;text-align:center;font:normal 7.054px/7.054px 'Liberation Sans', sans-serif;color:#1e1e1e;letter-spacing:0.000px;-webkit-text-stroke:0.05px #1e1e1e;transform:scale(0.8860,1.0000);transform-origin:0 0;">False</div></div>
<div style="left:142px;top:311.0px;width:591px;height:18.600000000000023px;background:#ffffff;"></div>
<div style="left:145.8px;top:317.33px;width:104px;height:9.05px;overflow:hidden;"><div style="position:absolute;left:0;top:0;font:normal 7.054px/7.054px 'Liberation Sans', sans-serif;color:#1e1e1e;letter-spacing:0.000px;-webkit-text-stroke:0.05px #1e1e1e;white-space:nowrap;transform:scale(0.8860,1.0000);transform-origin:0 0;">EE_Locations</div></div>
<div style="left:253.9px;top:317.33px;width:157px;height:9.05px;overflow:hidden;"><div style="position:absolute;left:0;top:0;font:normal 7.054px/7.054px 'Liberation Sans', sans-serif;color:#1e1e1e;letter-spacing:0.000px;-webkit-text-stroke:0.05px #1e1e1e;white-space:nowrap;transform:scale(0.8860,1.0000);transform-origin:0 0;">Location,USA</div></div>
<div style="left:415px;top:317.33px;width:157px;height:9.05px;overflow:hidden;"><div style="position:absolute;left:0;top:0;font:normal 7.054px/7.054px 'Liberation Sans', sans-serif;color:#1e1e1e;letter-spacing:0.000px;-webkit-text-stroke:0.05px #1e1e1e;white-space:nowrap;transform:scale(0.8860,1.0000);transform-origin:0 0;">Location,USA</div></div>
<div style="left:572px;top:317.33px;width:55px;height:9.05px;overflow:hidden;"><div style="position:absolute;left:0;top:0;width:62.08px;text-align:center;font:normal 7.054px/7.054px 'Liberation Sans', sans-serif;color:#1e1e1e;letter-spacing:0.000px;-webkit-text-stroke:0.05px #1e1e1e;transform:scale(0.8860,1.0000);transform-origin:0 0;">False</div></div>
<div style="left:142px;top:329.6px;width:591px;height:18.599999999999966px;background:#e3eefc;"></div>
<div style="left:145.8px;top:335.93px;width:104px;height:9.05px;overflow:hidden;"><div style="position:absolute;left:0;top:0;font:normal 7.054px/7.054px 'Liberation Sans', sans-serif;color:#1e1e1e;letter-spacing:0.000px;-webkit-text-stroke:0.05px #1e1e1e;white-space:nowrap;transform:scale(0.8860,1.0000);transform-origin:0 0;">EE_Organizations</div></div>
<div style="left:253.9px;top:335.93px;width:157px;height:9.05px;overflow:hidden;"><div style="position:absolute;left:0;top:0;font:normal 7.054px/7.054px 'Liberation Sans', sans-serif;color:#1e1e1e;letter-spacing:0.000px;-webkit-text-stroke:0.05px #1e1e1e;white-space:nowrap;transform:scale(0.8860,1.0000);transform-origin:0 0;">Organization,Stream International</div></div>
<div style="left:415px;top:335.93px;width:157px;height:9.05px;overflow:hidden;"><div style="position:absolute;left:0;top:0;font:normal 7.054px/7.054px 'Liberation Sans', sans-serif;color:#1e1e1e;letter-spacing:0.000px;-webkit-text-stroke:0.05px #1e1e1e;white-space:nowrap;transform:scale(0.8860,1.0000);transform-origin:0 0;">Organization,Stream International</div></div>
<div style="left:572px;top:335.93px;width:55px;height:9.05px;overflow:hidden;"><div style="position:absolute;left:0;top:0;width:62.08px;text-align:center;font:normal 7.054px/7.054px 'Liberation Sans', sans-serif;color:#1e1e1e;letter-spacing:0.000px;-webkit-text-stroke:0.05px #1e1e1e;transform:scale(0.8860,1.0000);transform-origin:0 0;">False</div></div>
<div style="left:142px;top:348.2px;width:591px;height:18.600000000000023px;background:#ffffff;"></div>
<div style="left:145.8px;top:354.53px;width:104px;height:9.05px;overflow:hidden;"><div style="position:absolute;left:0;top:0;font:normal 7.054px/7.054px 'Liberation Sans', sans-serif;color:#1e1e1e;letter-spacing:0.000px;-webkit-text-stroke:0.05px #1e1e1e;white-space:nowrap;transform:scale(0.8860,1.0000);transform-origin:0 0;">EE_Regions</div></div>
<div style="left:253.9px;top:354.53px;width:157px;height:9.05px;overflow:hidden;"><div style="position:absolute;left:0;top:0;font:normal 7.054px/7.054px 'Liberation Sans', sans-serif;color:#1e1e1e;letter-spacing:0.000px;-webkit-text-stroke:0.05px #1e1e1e;white-space:nowrap;transform:scale(0.8860,1.0000);transform-origin:0 0;">Region,West</div></div>
<div style="left:415px;top:354.53px;width:157px;height:9.05px;overflow:hidden;"><div style="position:absolute;left:0;top:0;font:normal 7.054px/7.054px 'Liberation Sans', sans-serif;color:#1e1e1e;letter-spacing:0.000px;-webkit-text-stroke:0.05px #1e1e1e;white-space:nowrap;transform:scale(0.8860,1.0000);transform-origin:0 0;">Region,West</div></div>
<div style="left:572px;top:354.53px;width:55px;height:9.05px;overflow:hidden;"><div style="position:absolute;left:0;top:0;width:62.08px;text-align:center;font:normal 7.054px/7.054px 'Liberation Sans', sans-serif;color:#1e1e1e;letter-spacing:0.000px;-webkit-text-stroke:0.05px #1e1e1e;transform:scale(0.8860,1.0000);transform-origin:0 0;">False</div></div>
<div style="left:142px;top:366.8px;width:591px;height:18.599999999999966px;background:#e3eefc;"></div>
<div style="left:145.8px;top:373.13px;width:104px;height:9.05px;overflow:hidden;"><div style="position:absolute;left:0;top:0;font:normal 7.054px/7.054px 'Liberation Sans', sans-serif;color:#1e1e1e;letter-spacing:0.000px;-webkit-text-stroke:0.05px #1e1e1e;white-space:nowrap;transform:scale(0.8860,1.0000);transform-origin:0 0;">EE_Roles</div></div>
<div style="left:253.9px;top:373.13px;width:157px;height:9.05px;overflow:hidden;"><div style="position:absolute;left:0;top:0;font:normal 7.054px/7.054px 'Liberation Sans', sans-serif;color:#1e1e1e;letter-spacing:0.000px;-webkit-text-stroke:0.05px #1e1e1e;white-space:nowrap;transform:scale(0.8860,1.0000);transform-origin:0 0;">Role,Technical Support</div></div>
<div style="left:415px;top:373.13px;width:157px;height:9.05px;overflow:hidden;"><div style="position:absolute;left:0;top:0;font:normal 7.054px/7.054px 'Liberation Sans', sans-serif;color:#1e1e1e;letter-spacing:0.000px;-webkit-text-stroke:0.05px #1e1e1e;white-space:nowrap;transform:scale(0.8860,1.0000);transform-origin:0 0;">Role,Technical Support</div></div>
<div style="left:572px;top:373.13px;width:55px;height:9.05px;overflow:hidden;"><div style="position:absolute;left:0;top:0;width:62.08px;text-align:center;font:normal 7.054px/7.054px 'Liberation Sans', sans-serif;color:#1e1e1e;letter-spacing:0.000px;-webkit-text-stroke:0.05px #1e1e1e;transform:scale(0.8860,1.0000);transform-origin:0 0;">False</div></div>
<div style="left:142px;top:385.4px;width:591px;height:18.600000000000023px;background:#ffffff;"></div>
<div style="left:145.8px;top:391.73px;width:104px;height:9.05px;overflow:hidden;"><div style="position:absolute;left:0;top:0;font:normal 7.054px/7.054px 'Liberation Sans', sans-serif;color:#1e1e1e;letter-spacing:0.000px;-webkit-text-stroke:0.05px #1e1e1e;white-space:nowrap;transform:scale(0.8860,1.0000);transform-origin:0 0;">Goal Ratings</div></div>
<div style="left:253.9px;top:388.50px;width:157px;height:9.05px;overflow:hidden;"><div style="position:absolute;left:0;top:0;font:normal 7.054px/7.054px 'Liberation Sans', sans-serif;color:#1e1e1e;letter-spacing:0.000px;-webkit-text-stroke:0.05px #1e1e1e;white-space:nowrap;transform:scale(0.8860,1.0000);transform-origin:0 0;">Exceptional,Exceeds Requirements,Meets</div></div>
<div style="left:253.9px;top:395.85px;width:157px;height:9.05px;overflow:hidden;"><div style="position:absolute;left:0;top:0;font:normal 7.054px/7.054px 'Liberation Sans', sans-serif;color:#1e1e1e;letter-spacing:0.000px;-webkit-text-stroke:0.05px #1e1e1e;white-space:nowrap;transform:scale(0.8860,1.0000);transform-origin:0 0;">Requirements,Marginal,Unsatisfactory,No Set</div></div>
<div style="left:415px;top:391.73px;width:157px;height:9.05px;overflow:hidden;"><div style="position:absolute;left:0;top:0;font:normal 7.054px/7.054px 'Liberation Sans', sans-serif;color:#1e1e1e;letter-spacing:0.000px;-webkit-text-stroke:0.05px #1e1e1e;white-space:nowrap;transform:scale(0.8860,1.0000);transform-origin:0 0;">5,4,3,2,1,0</div></div>
<div style="left:572px;top:391.73px;width:55px;height:9.05px;overflow:hidden;"><div style="position:absolute;left:0;top:0;width:62.08px;text-align:center;font:normal 7.054px/7.054px 'Liberation Sans', sans-serif;color:#1e1e1e;letter-spacing:0.000px;-webkit-text-stroke:0.05px #1e1e1e;transform:scale(0.8860,1.0000);transform-origin:0 0;">True</div></div>
<div style="left:142px;top:404.0px;width:591px;height:18.399999999999977px;background:#e3eefc;"></div>
<div style="left:145.8px;top:410.23px;width:104px;height:9.05px;overflow:hidden;"><div style="position:absolute;left:0;top:0;font:normal 7.054px/7.054px 'Liberation Sans', sans-serif;color:#1e1e1e;letter-spacing:0.000px;-webkit-text-stroke:0.05px #1e1e1e;white-space:nowrap;transform:scale(0.8860,1.0000);transform-origin:0 0;">Goal Weights</div></div>
<div style="left:253.9px;top:410.23px;width:157px;height:9.05px;overflow:hidden;"><div style="position:absolute;left:0;top:0;font:normal 7.054px/7.054px 'Liberation Sans', sans-serif;color:#1e1e1e;letter-spacing:0.000px;-webkit-text-stroke:0.05px #1e1e1e;white-space:nowrap;transform:scale(0.8860,1.0000);transform-origin:0 0;">10,20,30,40,50,60,70,80,90,100</div></div>
<div style="left:415px;top:410.23px;width:157px;height:9.05px;overflow:hidden;"><div style="position:absolute;left:0;top:0;font:normal 7.054px/7.054px 'Liberation Sans', sans-serif;color:#1e1e1e;letter-spacing:0.000px;-webkit-text-stroke:0.05px #1e1e1e;white-space:nowrap;transform:scale(0.8860,1.0000);transform-origin:0 0;">10,20,30,40,50,60,70,80,90,100</div></div>
<div style="left:572px;top:410.23px;width:55px;height:9.05px;overflow:hidden;"><div style="position:absolute;left:0;top:0;width:62.08px;text-align:center;font:normal 7.054px/7.054px 'Liberation Sans', sans-serif;color:#1e1e1e;letter-spacing:0.000px;-webkit-text-stroke:0.05px #1e1e1e;transform:scale(0.8860,1.0000);transform-origin:0 0;">True</div></div>
<div style="left:142px;top:422.4px;width:591px;height:24.80000000000001px;background:#ffffff;"></div>
<div style="left:145.8px;top:431.83px;width:104px;height:9.05px;overflow:hidden;"><div style="position:absolute;left:0;top:0;font:normal 7.054px/7.054px 'Liberation Sans', sans-serif;color:#1e1e1e;letter-spacing:0.000px;-webkit-text-stroke:0.05px #1e1e1e;white-space:nowrap;transform:scale(0.8860,1.0000);transform-origin:0 0;">JD Notification Actions Choice List</div></div>
<div style="left:253.9px;top:424.93px;width:157px;height:9.05px;overflow:hidden;"><div style="position:absolute;left:0;top:0;font:normal 7.054px/7.054px 'Liberation Sans', sans-serif;color:#1e1e1e;letter-spacing:0.000px;-webkit-text-stroke:0.05px #1e1e1e;white-space:nowrap;transform:scale(0.8860,1.0000);transform-origin:0 0;">None,Please Review the changes made to the Job</div></div>
<div style="left:253.9px;top:432.28px;width:157px;height:9.05px;overflow:hidden;"><div style="position:absolute;left:0;top:0;font:normal 7.054px/7.054px 'Liberation Sans', sans-serif;color:#1e1e1e;letter-spacing:0.000px;-webkit-text-stroke:0.05px #1e1e1e;white-space:nowrap;transform:scale(0.8860,1.0000);transform-origin:0 0;">Description,Employee Acknowledgement Workflow(s)</div></div>
<div style="left:253.9px;top:439.63px;width:157px;height:9.05px;overflow:hidden;"><div style="position:absolute;left:0;top:0;font:normal 7.054px/7.054px 'Liberation Sans', sans-serif;color:#1e1e1e;letter-spacing:0.000px;-webkit-text-stroke:0.05px #1e1e1e;white-space:nowrap;transform:scale(0.8860,1.0000);transform-origin:0 0;">may ...</div></div>
<div style="left:415px;top:424.93px;width:157px;height:9.05px;overflow:hidden;"><div style="position:absolute;left:0;top:0;font:normal 7.054px/7.054px 'Liberation Sans', sans-serif;color:#1e1e1e;letter-spacing:0.000px;-webkit-text-stroke:0.05px #1e1e1e;white-space:nowrap;transform:scale(0.8860,1.0000);transform-origin:0 0;">None,Please Review the changes made to the Job</div></div>
<div style="left:415px;top:432.28px;width:157px;height:9.05px;overflow:hidden;"><div style="position:absolute;left:0;top:0;font:normal 7.054px/7.054px 'Liberation Sans', sans-serif;color:#1e1e1e;letter-spacing:0.000px;-webkit-text-stroke:0.05px #1e1e1e;white-space:nowrap;transform:scale(0.8860,1.0000);transform-origin:0 0;">Description,Employee Acknowledgement Workflow(s)</div></div>
<div style="left:415px;top:439.63px;width:157px;height:9.05px;overflow:hidden;"><div style="position:absolute;left:0;top:0;font:normal 7.054px/7.054px 'Liberation Sans', sans-serif;color:#1e1e1e;letter-spacing:0.000px;-webkit-text-stroke:0.05px #1e1e1e;white-space:nowrap;transform:scale(0.8860,1.0000);transform-origin:0 0;">may ...</div></div>
<div style="left:572px;top:431.83px;width:55px;height:9.05px;overflow:hidden;"><div style="position:absolute;left:0;top:0;width:62.08px;text-align:center;font:normal 7.054px/7.054px 'Liberation Sans', sans-serif;color:#1e1e1e;letter-spacing:0.000px;-webkit-text-stroke:0.05px #1e1e1e;transform:scale(0.8860,1.0000);transform-origin:0 0;">False</div></div>
<div style="left:142px;top:447.2px;width:591px;height:24.19999999999999px;background:#e3eefc;"></div>
<div style="left:145.8px;top:456.33px;width:104px;height:9.05px;overflow:hidden;"><div style="position:absolute;left:0;top:0;font:normal 7.054px/7.054px 'Liberation Sans', sans-serif;color:#ff1aff;letter-spacing:0.000px;-webkit-text-stroke:0.05px #ff1aff;white-space:nowrap;transform:scale(0.8860,1.0000);transform-origin:0 0;">locations</div></div>
<div style="left:253.9px;top:449.43px;width:157px;height:9.05px;overflow:hidden;"><div style="position:absolute;left:0;top:0;font:normal 7.054px/7.054px 'Liberation Sans', sans-serif;color:#ff1aff;letter-spacing:0.000px;-webkit-text-stroke:0.05px #ff1aff;white-space:nowrap;transform:scale(0.8860,1.0000);transform-origin:0 0;">Savannah GA,Appleton WI,Brunswick GA,Dallas</div></div>
<div style="left:253.9px;top:456.78px;width:157px;height:9.05px;overflow:hidden;"><div style="position:absolute;left:0;top:0;font:normal 7.054px/7.054px 'Liberation Sans', sans-serif;color:#ff1aff;letter-spacing:0.000px;-webkit-text-stroke:0.05px #ff1aff;white-space:nowrap;transform:scale(0.8860,1.0000);transform-origin:0 0;">TX,Long Beach CA,Las Vegas NV,Lincoln CA,West</div></div>
<div style="left:253.9px;top:464.13px;width:157px;height:9.05px;overflow:hidden;"><div style="position:absolute;left:0;top:0;font:normal 7.054px/7.054px 'Liberation Sans', sans-serif;color:#ff1aff;letter-spacing:0.000px;-webkit-text-stroke:0.05px #ff1aff;white-space:nowrap;transform:scale(0.8860,1.0000);transform-origin:0 0;">Palm Beach...</div></div>
<div style="left:415px;top:449.43px;width:157px;height:9.05px;overflow:hidden;"><div style="position:absolute;left:0;top:0;font:normal 7.054px/7.054px 'Liberation Sans', sans-serif;color:#ff1aff;letter-spacing:0.000px;-webkit-text-stroke:0.05px #ff1aff;white-space:nowrap;transform:scale(0.8860,1.0000);transform-origin:0 0;">National Locations\Savannah GA,National</div></div>
<div style="left:415px;top:456.78px;width:157px;height:9.05px;overflow:hidden;"><div style="position:absolute;left:0;top:0;font:normal 7.054px/7.054px 'Liberation Sans', sans-serif;color:#ff1aff;letter-spacing:0.000px;-webkit-text-stroke:0.05px #ff1aff;white-space:nowrap;transform:scale(0.8860,1.0000);transform-origin:0 0;">Locations\Appleton WI,National Locations\Brunswick</div></div>
<div style="left:415px;top:464.13px;width:157px;height:9.05px;overflow:hidden;"><div style="position:absolute;left:0;top:0;font:normal 7.054px/7.054px 'Liberation Sans', sans-serif;color:#ff1aff;letter-spacing:0.000px;-webkit-text-stroke:0.05px #ff1aff;white-space:nowrap;transform:scale(0.8860,1.0000);transform-origin:0 0;">GA,Nation...</div></div>
<div style="left:572px;top:456.33px;width:55px;height:9.05px;overflow:hidden;"><div style="position:absolute;left:0;top:0;width:62.08px;text-align:center;font:normal 7.054px/7.054px 'Liberation Sans', sans-serif;color:#ff1aff;letter-spacing:0.000px;-webkit-text-stroke:0.05px #ff1aff;transform:scale(0.8860,1.0000);transform-origin:0 0;">False</div></div>
<div style="left:630.6px;top:456.33px;width:77px;height:9.05px;overflow:hidden;"><div style="position:absolute;left:0;top:0;font:normal 7.054px/7.054px 'Liberation Sans', sans-serif;color:#ff1aff;letter-spacing:0.000px;-webkit-text-stroke:0.05px #ff1aff;white-space:nowrap;transform:scale(0.8860,1.0000);transform-origin:0 0;">Locations.XLS</div></div>
<div style="left:142px;top:471.4px;width:591px;height:7px;background:#fff;"></div>
<div style="left:412px;top:472px;width:160px;height:5px;overflow:hidden;"><div style="position:absolute;left:5px;top:1.0px;font:normal 7.054px/7.054px 'Liberation Sans', sans-serif;color:#1e1e1e;white-space:nowrap;-webkit-text-stroke:0.05px #1e1e1e;transform:scaleX(0.886);transform-origin:0 0;">RUB,ARS,AUD,BRL,CAD,CLP,CNY,EUR,(FRA),EUR</div></div>
<div style="left:142px;top:124.7px;width:591px;height:1px;background:#dfe4ea;"></div>
<div style="left:142px;top:143.29999999999998px;width:591px;height:1px;background:#dfe4ea;"></div>
<div style="left:142px;top:161.89999999999998px;width:591px;height:1px;background:#dfe4ea;"></div>
<div style="left:142px;top:180.5px;width:591px;height:1px;background:#dfe4ea;"></div>
<div style="left:142px;top:199.1px;width:591px;height:1px;background:#dfe4ea;"></div>
<div style="left:142px;top:217.7px;width:591px;height:1px;background:#dfe4ea;"></div>
<div style="left:142px;top:236.29999999999998px;width:591px;height:1px;background:#dfe4ea;"></div>
<div style="left:142px;top:254.89999999999998px;width:591px;height:1px;background:#dfe4ea;"></div>
<div style="left:142px;top:273.5px;width:591px;height:1px;background:#dfe4ea;"></div>
<div style="left:142px;top:292.09999999999997px;width:591px;height:1px;background:#dfe4ea;"></div>
<div style="left:142px;top:310.7px;width:591px;height:1px;background:#dfe4ea;"></div>
<div style="left:142px;top:329.3px;width:591px;height:1px;background:#dfe4ea;"></div>
<div style="left:142px;top:347.9px;width:591px;height:1px;background:#dfe4ea;"></div>
<div style="left:142px;top:366.5px;width:591px;height:1px;background:#dfe4ea;"></div>
<div style="left:142px;top:385.09999999999997px;width:591px;height:1px;background:#dfe4ea;"></div>
<div style="left:142px;top:403.7px;width:591px;height:1px;background:#dfe4ea;"></div>
<div style="left:142px;top:422.09999999999997px;width:591px;height:1px;background:#dfe4ea;"></div>
<div style="left:142px;top:446.9px;width:591px;height:1px;background:#dfe4ea;"></div>
<div style="left:142px;top:471.09999999999997px;width:591px;height:1px;background:#dfe4ea;"></div>
<div style="left:250px;top:101px;width:1px;height:377.5px;background:#dde3ea;"></div>
<div style="left:411px;top:101px;width:1px;height:377.5px;background:#dde3ea;"></div>
<div style="left:572px;top:101px;width:1px;height:377.5px;background:#dde3ea;"></div>
<div style="left:627px;top:101px;width:1px;height:377.5px;background:#dde3ea;"></div>
<div style="left:708px;top:101px;width:1px;height:377.5px;background:#dde3ea;"></div>
<div style="left:142px;top:82px;width:1px;height:397px;background:#c9c9c9;"></div>
<div style="left:142px;top:478px;width:595px;height:1px;background:#d0d0d0;"></div>
<div style="left:733px;top:101px;width:4px;height:377px;background:#efefef;"></div>
<div style="left:733px;top:101px;width:4px;height:179.5px;background:#c4c4c4;"></div>
<div style="left:737px;top:82px;width:160px;height:397px;background:#fff;border-bottom:1px solid #e4e4e4;border-right:1px solid #e8e8e8;box-sizing:border-box;"></div>
<div style="left:743.6px;top:87.33px;font:normal 8.470px/8.470px 'Liberation Serif', serif;color:#111;letter-spacing:0.000px;">Select a List on the left to view details.</div>
<div style="left:0px;top:0px;width:900px;height:1px;background:#000;"></div>
<div style="left:0px;top:0px;width:1px;height:482px;background:#000;"></div>
<div style="left:898px;top:0px;width:1px;height:482px;background:#e0e0e0;"></div>
<div style="left:899px;top:0px;width:1px;height:482px;background:#000;"></div>
<div style="left:0px;top:480px;width:899px;height:1px;background:#6a6a6a;"></div>
<div style="left:0px;top:481px;width:900px;height:1px;background:#000;"></div>
</body></html>
